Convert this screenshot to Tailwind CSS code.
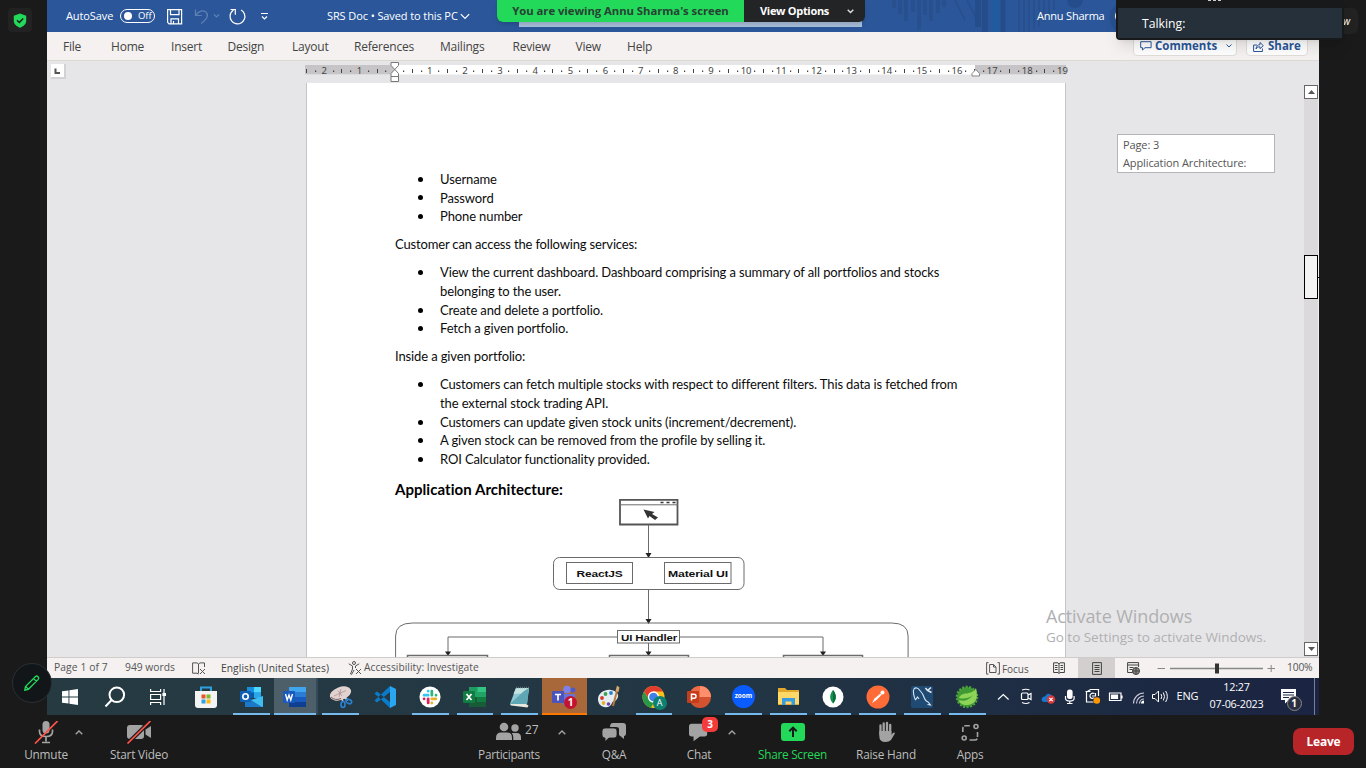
<!DOCTYPE html>
<html lang="en">
<head>
<meta charset="utf-8">
<title>SRS Doc</title>
<script src="https://cdn.jsdelivr.net/npm/@tailwindcss/browser@4"></script>
</head>
<body class="bg-[#1a1a1a]">
<div class="relative w-[1366px] h-[768px] overflow-hidden flex flex-col bg-[#1a1a1a] font-['Open_Sans',sans-serif]">
  <div class="h-[715px] flex">
    <!-- left gutter -->
    <aside class="w-[47px] pt-2 pl-2">
      <div class="size-6 rounded bg-[#222] flex items-center justify-center">
        <svg class="w-[14px] h-[15px]" viewBox="0 0 14 15"><path d="M7 .4 13.2 2.8V8c0 3.200-3 5.400-6.200 6.800C3.800 13.400.8 11.200.8 8V2.800z" fill="#23d959"/><path d="M4 7.300l2.300 2.200L10.200 5.500" fill="none" stroke="#1a1a1a" stroke-width="1.500"/></svg>
      </div>
    </aside>

    <main class="w-[1272px] flex flex-col">
      <!-- title bar -->
      <header class="h-8 bg-[#2b579a] relative flex items-center text-white text-[11px] tracking-[-0.1px] whitespace-nowrap">
        <svg class="absolute left-[830px] top-0 w-[300px] h-8" viewBox="0 0 300 32" fill="none">
          <g stroke="#28508f" stroke-width="4"><path d="M17 0v8M23 0v14M29 0v21M36 0v12M42 0v30M48 0v15M54 0v21M61 0v13M67 0v7"/></g>
          <path d="M78 0l10 20M90 0l10 20" stroke="#28508f" stroke-width="2"/>
          <path d="M101 0v27M108 0v32" stroke="#264d8b" stroke-width="6"/><path d="M118 0v32" stroke="#205a9f" stroke-width="7"/><path d="M126 0v32" stroke="#264d8b" stroke-width="5"/>
          <g stroke="#28508f" stroke-width="2"><path d="M142 0v32M147 0v32M152 0v32M157 0v30M162 0v27M167 0v22M172 0v16M177 0v10"/></g>
          <path d="M190 0a8 8 0 0 0 16 0z" fill="#264d8b"/><circle cx="248" cy="18" r="13" stroke="#28508f" stroke-width="5"/>
        </svg>
        <div class="relative flex items-center h-8 w-full">
          <span class="ml-[19px] w-[47px]">AutoSave</span>
          <span class="ml-[7px] w-[35px] h-[14px] border border-white rounded-full flex items-center pl-[3px] text-[9.500px]"><i class="size-2 rounded-full bg-white mr-[6px]"></i>Off</span>
          <svg class="ml-[11px] w-[106px] h-5" viewBox="166 6 106 20" fill="none" stroke="#fff" stroke-width="1.200">
            <path d="M167.600 9.600h14v14.200h-12.500l-1.500-1.500zM170.500 9.600v5h8.500v-5M171 23.800v-5h7.500v5M173.500 21v2.800"/>
            <g stroke="#5e80b5"><path d="M195.500 9.500v6h6.200M195.800 15.200c3-4 7-5.600 10-3.300 3.500 3.200 1.300 7-4.800 11.700"/><path d="M214 14.500l2.500 2.500 2.500-2.500"/></g>
            <path d="M233.500 10c-2 1.400-3.400 3.500-3.400 6a7.400 7.400 0 1 0 11-6M230.500 9.500h4.800v5.200"/>
            <path d="M261 13.500h7M262 16.500l2.500 2.500 2.500-2.500"/>
          </svg>
          <span class="ml-[55px] w-[132px]">SRS Doc • Saved to this PC</span>
          <svg class="ml-[1px] w-[10px] h-[7px]" viewBox="0 0 10 7" fill="none" stroke="#fff" stroke-width="1.200"><path d="M.8 1.200 5 5.400 9.200 1.200"/></svg>
          <span class="ml-[567px] text-[11px] tracking-[-0.2px]">Annu Sharma</span>
          <i class="ml-[10px] size-[16px] rounded-full bg-[#e8cfa4] border border-white"></i>
        </div>
        <i class="absolute left-[472px] top-0 w-[343px] h-[27px] bg-[#a9bfdc]"></i>
      </header>

      <!-- ribbon tabs -->
      <nav class="h-7 pt-px bg-[#f4f1f0] flex items-center text-[12px] tracking-[-0.22px] text-[#444] relative">
        <span class="ml-4 w-[48px]">File</span><span class="w-[60px]">Home</span><span class="w-[56.500px]">Insert</span><span class="w-[64.500px]">Design</span><span class="w-[62px]">Layout</span><span class="w-[86px]">References</span><span class="w-[72.500px]">Mailings</span><span class="w-[63px]">Review</span><span class="w-[51.500px]">View</span><span>Help</span>
        <div class="ml-auto mr-[11px] flex gap-[9px] h-5 -mt-px text-[#2b579a] font-bold text-[11.500px] tracking-[0px]">
          <div class="w-[104px] h-[20px] bg-white border border-[#e0dddb] flex items-center pl-[6px] rounded-sm">
            <svg class="w-3 h-[10px] mr-[3px]" viewBox="0 0 12 10" fill="none" stroke="#2b579a"><path d="M.7.700h10.400v6H5L2.500 9V6.700H.7z"/></svg>Comments
            <svg class="ml-[9px] w-[6px] h-1" viewBox="0 0 6 4" fill="none" stroke="#2b579a"><path d="M.5.500 3 3 5.500.5"/></svg>
          </div>
          <div class="w-[62px] h-[20px] bg-white border border-[#e0dddb] flex items-center pl-[6px] rounded-sm">
            <svg class="w-[11px] h-[11px] mr-[4px]" viewBox="0 0 11 11" fill="none" stroke="#2b579a"><path d="M4 4H.6v6.500h8.800V7.500M3 8c.3-3 2-4.300 4-4.300V1.500l3.300 3.200L7 7.700V5.800C5 5.800 4 6.500 3 8z"/></svg>Share
          </div>
        </div>
      </nav>

      <!-- workspace -->
      <section class="h-[597px] bg-[#e6e6e8] border-t border-[#dcd8d4] relative flex flex-col overflow-hidden">
        <div class="h-[22px] relative flex">
          <div class="ml-1 mt-[3px] size-[15px] bg-white border-r-2 border-b-2 border-[#d2d2d4] shrink-0">
            <svg class="size-[13px]" viewBox="0 0 13 13"><path d="M4.500 4.500v4.500h4.500" fill="none" stroke="#555" stroke-width="2"/></svg>
          </div>
          <svg class="ml-[239px] mt-0 w-[764px] h-[22px] shrink-0" viewBox="305 61 764 22" font-family="Noto Sans, sans-serif" font-size="9.500" fill="#444" text-anchor="middle">
            <path d="M305 65h761v9.500H305z" fill="#fff"/><path d="M305 65h90v9.500h-90zM975 65h91v9.500h-91z" fill="#c6c4c6"/>
            <g id="ruler-marks"></g>
            <path d="M391 62.500h7.500v3l-3.700 4-3.800-4zM391 76.500v-3l3.800-4 3.700 4v3zM391 76.500h7.500v5H391z" fill="#fff" stroke="#777"/>
            <path d="M972 76v-2.500l3.800-4 3.700 4V76z" fill="#fff" stroke="#888"/>
          </svg>
        </div>

        <article class="ml-[259px] w-[760px] h-[574px] bg-white border-x border-[#c4c4c6] pt-[87px] pl-[88px] overflow-hidden font-[Lato] text-[13px] leading-[18.650px] tracking-[-0.12px] text-[#0c0c0c] whitespace-nowrap">
          <ul class="flex flex-col">
            <li class="flex items-center before:content-[''] before:size-[5px] before:rounded-full before:bg-black before:ml-[23px] before:mr-[17px]">Username</li>
            <li class="flex items-center before:content-[''] before:size-[5px] before:rounded-full before:bg-black before:ml-[23px] before:mr-[17px]">Password</li>
            <li class="flex items-center before:content-[''] before:size-[5px] before:rounded-full before:bg-black before:ml-[23px] before:mr-[17px]">Phone number</li>
          </ul>
          <p class="mt-[9.300px] mb-[9.500px] tracking-[-0.16px]">Customer can access the following services:</p>
          <ul class="flex flex-col">
            <li class="flex items-center before:content-[''] before:size-[5px] before:rounded-full before:bg-black before:ml-[23px] before:mr-[17px]">View the current dashboard. Dashboard comprising a summary of all portfolios and stocks</li>
            <li class="pl-[45px]">belonging to the user.</li>
            <li class="flex items-center before:content-[''] before:size-[5px] before:rounded-full before:bg-black before:ml-[23px] before:mr-[17px]">Create and delete a portfolio.</li>
            <li class="flex items-center before:content-[''] before:size-[5px] before:rounded-full before:bg-black before:ml-[23px] before:mr-[17px]">Fetch a given portfolio.</li>
          </ul>
          <p class="mt-[9.100px] mb-[9.700px]">Inside a given portfolio:</p>
          <ul class="flex flex-col">
            <li class="flex items-center before:content-[''] before:size-[5px] before:rounded-full before:bg-black before:ml-[23px] before:mr-[17px] tracking-[-0.134px]">Customers can fetch multiple stocks with respect to different filters. This data is fetched from</li>
            <li class="pl-[45px]">the external stock trading API.</li>
            <li class="flex items-center before:content-[''] before:size-[5px] before:rounded-full before:bg-black before:ml-[23px] before:mr-[17px]">Customers can update given stock units (increment/decrement).</li>
            <li class="flex items-center before:content-[''] before:size-[5px] before:rounded-full before:bg-black before:ml-[23px] before:mr-[17px]">A given stock can be removed from the profile by selling it.</li>
            <li class="flex items-center before:content-[''] before:size-[5px] before:rounded-full before:bg-black before:ml-[23px] before:mr-[17px]">ROI Calculator functionality provided.</li>
          </ul>
          <h2 class="mt-[9.600px] h-[20px] leading-[22px] font-bold text-[15px] tracking-[0.05px] text-black">Application Architecture:</h2>
          <svg class="w-[520px] h-[160px]" viewBox="395 498 520 160" fill="none" stroke="#6b6b6b" font-family="Liberation Sans, sans-serif" font-weight="700" font-size="9.500">
            <path d="M620 499.800h57.500v24.700H620z" stroke-width="1.800" stroke="#555"/><path d="M620 504.800h58" stroke-width="1"/>
            <path d="M660.500 502.500h3M666.500 502.500h3M672.500 502.500h3" stroke="#333" stroke-width="1.400"/>
            <path d="M643.500 509.500l11 2.500-2.500 2 6 3.500-3 2.500-5.500-4-1.500 2.500z" fill="#333" stroke="none"/>
            <path d="M648.500 525v29M648.500 590v30M648.500 643v9M618 637H448v15M680 637h143v15"/>
            <path d="M645.500 553h6l-3 5zM645.500 619h6l-3 5zM645.500 651.500h6l-3 4.500zM445 651.500h6l-3 4.500zM820 651.500h6l-3 4.500z" fill="#222" stroke="none"/>
            <rect x="553.500" y="557.500" width="190.500" height="32" rx="6"/>
            <rect x="566.500" y="562.500" width="66" height="21"/><rect x="664.500" y="562.500" width="66.500" height="21"/>
            <path d="M395.600 658V636q0-13 17-13h479q16.500 0 16.500 13v22"/>
            <rect x="617.500" y="630.500" width="62" height="12.500"/>
            <path d="M407.500 658v-2.500h80v2.500M609.500 658v-2.500h79v2.500M783.500 658v-2.500h79v2.500" stroke-width="1.500"/>
            <g fill="#111" stroke="none" text-anchor="middle"><text x="599.500" y="576.600" textLength="46" lengthAdjust="spacingAndGlyphs">ReactJS</text><text x="698" y="576.600" textLength="60" lengthAdjust="spacingAndGlyphs">Material UI</text><text x="649" y="640.600" textLength="56" lengthAdjust="spacingAndGlyphs">UI Handler</text></g>
          </svg>
        </article>

        <!-- scroll position tooltip -->
        <div class="absolute left-[1070px] top-[73px] w-[158px] h-[39px] bg-white border border-[#b5b5b7] pl-[5px] pt-px text-[11px] leading-[17.500px] tracking-[-0.11px] text-[#555] whitespace-nowrap">
          <div>Page: 3</div><div>Application Architecture:</div>
        </div>
        <!-- scrollbar -->
        <div class="absolute right-0 top-[24px] w-[15px] h-[572px] bg-[#dbd9dc] flex flex-col justify-between border-r border-[#eee]">
          <div class="size-[14px] bg-white border border-[#666] flex items-center justify-center"><svg class="w-[7px] h-1" viewBox="0 0 7 4"><path d="M0 4 3.500 0 7 4z" fill="#555"/></svg></div>
          <div class="size-[14px] bg-white border border-[#666] flex items-center justify-center mb-[1px]"><svg class="w-[7px] h-1" viewBox="0 0 7 4"><path d="M0 0 3.500 4 7 0z" fill="#555"/></svg></div>
          <i class="absolute left-0 top-[170px] w-[14px] h-[44px] bg-[#f3f3f3] border border-black"></i>
          <i class="absolute left-[13px] top-[192px] w-[2px] h-px bg-black"></i>
        </div>
        <!-- activation watermark -->
        <div class="absolute left-[999px] top-[543px] text-[#b0b0b2] whitespace-nowrap">
          <div class="text-[18px] leading-[24px] tracking-[-0.1px]">Activate Windows</div>
          <div class="text-[13.500px] leading-[18px] tracking-[-0.030px]">Go to Settings to activate Windows.</div>
        </div>
      </section>

      <!-- status bar -->
      <footer class="h-[21px] bg-[#f4f1f0] border-t border-[#cfcccb] flex items-center text-[10.300px] text-[#555] whitespace-nowrap">
        <span class="ml-[7px] w-[71px] tracking-[0.1px]">Page 1 of 7</span><span class="w-[67px]">949 words</span>
        <svg class="w-[14px] h-[13px]" viewBox="0 0 14 13" fill="none" stroke="#555"><path d="M6.500 11.500V2L5 .9H.6V11.200H5l1.500.8M6.500 2 8 .9h4.500V5M8 7l5 5M13 7l-5 5"/></svg>
        <span class="ml-[15px] w-[127px] mt-[2px] text-[#444] tracking-[0.04px]">English (United States)</span>
        <svg class="w-[14px] h-[14px] mr-[2px]" viewBox="0 0 14 14" fill="none" stroke="#555"><circle cx="6" cy="2" r="1.500"/><path d="M.8 2.800 4.500 5v3L2.500 13l1.200.3L6 9M11.200 2.800 7.500 5v2M8 8l5 5M13 8l-5 5"/></svg>
        <span class="text-[10.200px] tracking-[0.04px]">Accessibility: Investigate</span>
        <svg class="ml-auto w-[14px] h-[13px] mr-[2px]" viewBox="0 0 14 13" fill="none" stroke="#555"><path d="M2.500.600H.6v11.500h1.900M11.500.6h1.900v11.500h-1.900M3.600 2.500h4L10 5v5.500H3.600zM7.500 2.500V5H10"/></svg>
        <span class="w-[51px] mt-[2px] text-[10px] tracking-[-0.04px]">Focus</span>
        <svg class="w-[12px] h-[12px]" viewBox="0 0 12 12" fill="none" stroke="#444"><path d="M6 2v9.500M6 2 5 .8H.6v9.700H5l1 1 1-1h4.400V.8H7zM2 3.500h2.500M2 5.500h2.500M2 7.500h2.500M7.500 3.500H10M7.500 5.500H10M7.500 7.500H10"/></svg>
        <span class="ml-[13px] w-[37px] h-5 bg-[#d2cfce] flex items-center justify-center"><svg class="w-[10px] h-[13px]" viewBox="0 0 10 13" fill="none" stroke="#444"><path d="M.6.600h8.800v11.800H.6zM2.500 3.500h5M2.500 5.500h5M2.500 7.500h5M2.500 9.500h5"/></svg></span>
        <svg class="ml-[12px] w-[13px] h-[13px]" viewBox="0 0 13 13" fill="none" stroke="#444"><path d="M6 10.500H.6V.6h11V5M.6 3h11M2.500 5.500h4M2.500 7.500h3"/><circle cx="9" cy="9" r="3.500" fill="#888"/><path d="M5.500 9h7M9 5.500v7"/></svg>
        <svg class="ml-[17px] w-[120px] h-[13px]" viewBox="1156 661 120 13" fill="none" stroke="#888"><path d="M1156.500 667.500h7.500M1266.500 667.500h7.500M1270.200 664v7"/><path d="M1169 667.500h93" stroke-width="1.300"/><path d="M1214 662.500h4v10h-4z" fill="#333" stroke="none"/></svg>
        <span class="ml-[10px] w-[32px] text-[10.300px] tracking-[-0.2px]">100%</span>
      </footer>

      <!-- taskbar -->
      <div class="h-[37px] bg-gradient-to-r from-[#253a41] via-[#223744] via-50% to-[#1b2442] flex">
        <div class="w-[45px] flex items-center justify-center"><svg class="size-4" viewBox="0 0 16 16" fill="#fff"><path d="M0 2.300 6.500 1.400V7.600H0zM7.400 1.200 16 0v7.600H7.400zM0 8.400h6.500v6.200L0 13.700zM7.400 8.400H16V16l-8.600-1.200z"/></svg></div>
        <div class="w-[45px] flex items-center justify-center"><svg class="size-[22px]" viewBox="0 0 22 22" fill="none" stroke="#fff" stroke-width="2"><circle cx="12.800" cy="8.800" r="7.300"/><path d="M7.600 14 1.500 20.500"/></svg></div>
        <div class="w-[45px] flex items-center justify-center"><svg class="size-4 mr-[3px]" viewBox="0 0 16 16" fill="none" stroke="#fff" stroke-width="1.200"><path d="M.6 0v2.500h10V0M.6 5.500h10v5H.6zM.6 16v-2.500h10V16M14 0v16"/><path d="M13 4.500h2.500v2H13z" fill="#fff"/></svg></div>
        <div class="ml-[2px] w-[44.750px] flex items-center justify-center"><svg class="size-6" viewBox="0 0 24 24"><path d="M7 6V2.500h10V6" fill="none" stroke="#2f9fe0" stroke-width="2"/><path d="M1 6h22v14q0 3-3 3H4q-3 0-3-3z" fill="#f3f3f3"/><path d="M7.500 9.500h4v4h-4z" fill="#e8532a"/><path d="M12.500 9.500h4v4h-4z" fill="#7db928"/><path d="M7.500 14.500h4v4h-4z" fill="#2b9fe6"/><path d="M12.500 14.500h4v4h-4z" fill="#fbb813"/></svg></div>
        <div class="w-[44.750px] flex items-center justify-center relative"><svg class="size-6" viewBox="0 0 24 24"><path d="M8 2h14v11H8z" fill="#1490df"/><path d="M15 2h7v5.500h-7z" fill="#50d9ff"/><path d="M8 7.500h7V13H8z" fill="#0a5aa8"/><path d="M15 7.500h7V13h-7z" fill="#28a8ea"/><path d="M6 11l9 5 9-5v10q0 1-1 1H6z" fill="#1c78c8"/><path d="M24 11v10q0 1-1 1L12 15z" fill="#3dbdf0"/><rect x="1" y="6" width="11" height="11" rx="1" fill="#0f5fb5"/><circle cx="6.500" cy="11.500" r="2.700" fill="none" stroke="#fff" stroke-width="1.600"/></svg><i class="absolute bottom-0 left-1 right-1 h-[2px] bg-[#76b9ed]"></i></div>
        <div class="w-[44.750px] flex items-center justify-center relative bg-[#4d5f69] border-r-2 border-[#34495a]"><svg class="size-6" viewBox="0 0 24 24"><path d="M6 2h17v5H6z" fill="#41a5ee"/><path d="M6 7h17v5H6z" fill="#2b7cd3"/><path d="M6 12h17v5H6z" fill="#185abd"/><path d="M6 17h17v5H6z" fill="#103f91"/><rect x="0" y="6" width="12" height="12" rx="1" fill="#185abd"/><path d="M2.500 9l1.700 6L6 10l1.800 5 1.700-6" fill="none" stroke="#fff" stroke-width="1.400"/></svg><i class="absolute bottom-0 left-0 right-0 h-[2px] bg-[#76b9ed]"></i></div>
        <div class="w-[44.750px] flex items-center justify-center relative"><svg class="size-6" viewBox="0 0 24 24"><path d="M11 8l3 9M11 10l8 5" stroke="#cfd6da" stroke-width="1.500"/><ellipse cx="11.500" cy="8.500" rx="11" ry="6.500" transform="rotate(-20 11.500 8.500)" fill="#e2d3d1"/><path d="M5 11 17 5.500M9 5.500l4 5.500M12 4l-2 8" stroke="#a58a8a" stroke-width=".7"/><path d="M2 12q4 4 10 1.500" stroke="#7d5f60" fill="none"/><ellipse cx="14" cy="19.500" rx="2" ry="3" fill="none" stroke="#2a7fd0" stroke-width="1.700"/><ellipse cx="20" cy="16.500" rx="3" ry="2" fill="none" stroke="#2a7fd0" stroke-width="1.700" transform="rotate(25 20 16)"/></svg><i class="absolute bottom-0 left-1 right-1 h-[2px] bg-[#76b9ed]"></i></div>
        <div class="w-[44.750px] flex items-center justify-center"><svg class="size-6" viewBox="0 0 24 24"><path d="M17 1 23 4v16l-6 3z" fill="#2aa5f2"/><path d="M17 1v6L4 17.500 1.500 15.500zM17 23v-6L4 6.500 1.500 8.500z" fill="#0a7bc9"/></svg></div>
        <div class="w-[44.750px] flex items-center justify-center relative"><svg class="size-[22px]" viewBox="0 0 24 24" stroke-width="3" stroke-linecap="round"><circle cx="12" cy="12" r="11.500" fill="#fff"/><path d="M5.500 10h4.500M10 5.500v.1" stroke="#36c5f0"/><path d="M14 5.500v4.500M18.500 10h.1" stroke="#2eb67d"/><path d="M14 14h4.500M14 18.500v.1" stroke="#ecb22e"/><path d="M10 14v4.500M5.500 14h.1" stroke="#e01e5a"/></svg><i class="absolute bottom-0 left-1 right-1 h-[2px] bg-[#76b9ed]"></i></div>
        <div class="w-[44.750px] flex items-center justify-center relative"><svg class="size-6" viewBox="0 0 24 24"><path d="M6 2h17v20H6z" fill="#21a366"/><path d="M6 2h8.500v5H6z" fill="#1f9d60"/><path d="M14.500 2H23v5h-8.500z" fill="#33c481"/><path d="M6 12h8.500v10H6zM14.500 17H23v5h-8.500z" fill="#185c37"/><path d="M14.500 12H23v5h-8.500z" fill="#107c41"/><rect y="6" width="12" height="12" rx="1" fill="#107c41"/><path d="M3.500 9l5 6M8.500 9l-5 6" stroke="#fff" stroke-width="1.700"/></svg><i class="absolute bottom-0 left-1 right-1 h-[2px] bg-[#76b9ed]"></i></div>
        <div class="w-[44.750px] flex items-center justify-center relative"><svg class="size-6" viewBox="0 0 24 24"><path d="M8 3h13l-2 16H2z" fill="#8fc8d0"/><path d="M8 3h13l-1 5L5.500 9z" fill="#c4e4e4"/><path d="M2 19 16 6l5-3-2 16z" fill="#5fa7b4"/><path d="M2 19h16l2.500 1.500-1 2L3 20.500z" fill="#e8e8e0"/><path d="M8 2.500h13" stroke="#5b6f75" stroke-width="1.500" stroke-dasharray="1 1"/></svg><i class="absolute bottom-0 left-1 right-1 h-[2px] bg-[#76b9ed]"></i></div>
        <div class="w-[44.750px] flex items-center justify-center relative bg-[#a9683a]"><svg class="size-6" viewBox="0 0 24 24"><circle cx="15" cy="4.500" r="3.800" fill="#7b83eb"/><circle cx="21" cy="5" r="2.500" fill="#5059c9"/><path d="M9 9h14v8q-1 5-6 5t-8-6z" fill="#6a73d8"/><rect x="0" y="6" width="12" height="12" rx="1" fill="#4b53bc"/><path d="M3 9.500h6M6 9.500V15.500" stroke="#fff" stroke-width="1.700"/></svg><b class="absolute left-[22px] top-[18px] size-[13px] rounded-full bg-[#c4122f] text-white text-[10px] leading-[13px] text-center">1</b><i class="absolute bottom-0 left-0 right-0 h-[2px] bg-[#ff7800]"></i></div>
        <div class="w-[44.750px] flex items-center justify-center"><svg class="size-6" viewBox="0 0 24 24"><path d="M1 14C1 8 8 4 14 5s9 5 6 9-4 1-5 4-4 5-8 4-6-4-6-8z" fill="#e6edf2"/><circle cx="5" cy="13" r="1.900" fill="#d23b2b"/><circle cx="8.500" cy="9" r="1.900" fill="#3ba24b"/><circle cx="14" cy="8" r="1.900" fill="#2d7fd0"/><circle cx="6.500" cy="18" r="1.900" fill="#e8b02b"/><circle cx="11.500" cy="19" r="1.800" fill="#6d3fb0"/><path d="M20 6 16 21" stroke="#b8793a" stroke-width="2"/><path d="M18.500 6 20 .5l2.500 2L21.500 7z" fill="#d9a866"/></svg></div>
        <div class="w-[44.750px] flex items-center justify-center relative"><svg class="size-6" viewBox="0 0 24 24"><circle cx="11.500" cy="12" r="11" fill="#fbc116"/><path d="M2 6.500A11 11 0 0 1 21 6.500H11.500L7 14z" fill="#e33b2e"/><path d="M2 6.500 8 16l4 1-3 5.700A11 11 0 0 1 2 6.500z" fill="#279847"/><circle cx="11.500" cy="12" r="5" fill="#3f80e8" stroke="#fff" stroke-width="1.300"/></svg><b class="absolute left-[21px] top-[18px] size-[14px] rounded-full bg-[#0d8070] text-white font-normal text-[9px] leading-[14px] text-center">A</b><i class="absolute bottom-0 left-1 right-1 h-[2px] bg-[#76b9ed]"></i></div>
        <div class="w-[44.750px] flex items-center justify-center"><svg class="size-6" viewBox="0 0 24 24"><circle cx="13" cy="12" r="11" fill="#d35230"/><path d="M13 1a11 11 0 0 1 11 11H13z" fill="#ff8f6b"/><path d="M2 12a11 11 0 0 1 11-11v11z" fill="#ed6c47"/><rect y="6" width="12" height="12" rx="1" fill="#c43e1c"/><path d="M4.500 15.500V9.200H7q2 0 2 2t-2 2H4.500" fill="none" stroke="#fff" stroke-width="1.500"/></svg></div>
        <div class="w-[44.750px] flex items-center justify-center relative"><b class="size-[23px] rounded-full bg-[#0b5cff] text-white text-[6.500px] tracking-[-0.1px] leading-[21px] text-center">zoom</b><i class="absolute bottom-0 left-1 right-1 h-[2px] bg-[#76b9ed]"></i></div>
        <div class="w-[44.750px] flex items-center justify-center relative"><svg class="w-[21px] h-[19px]" viewBox="0 0 21 19"><path d="M0 1h7l2 2h12v15H0z" fill="#e3a72c"/><path d="M0 5h21v12H0z" fill="#ffd867"/><path d="M4 18v-7h13v7h-3.500v-3.500h-6V18z" fill="#3a9be0"/></svg><i class="absolute bottom-0 left-1 right-1 h-[2px] bg-[#76b9ed]"></i></div>
        <div class="w-[44.750px] flex items-center justify-center relative"><svg class="size-[22px]" viewBox="0 0 22 22"><circle cx="11" cy="11" r="10.500" fill="#fff"/><path d="M11 4c4 5 3.500 10 0 13.500C7.500 14 7 9 11 4z" fill="#12924f"/><path d="M11 4c4 5 3.500 10 0 13.500v1.500z" fill="#0b6b3a"/></svg><i class="absolute bottom-0 left-1 right-1 h-[2px] bg-[#76b9ed]"></i></div>
        <div class="w-[44.750px] flex items-center justify-center relative"><svg class="size-6" viewBox="0 0 24 24"><circle cx="12" cy="12" r="11.500" fill="#ff6c37"/><path d="M6 18l2.500-4.500 6-5 1.200 1.200L10.500 15z" fill="#fff"/><circle cx="16.500" cy="7.500" r="2" fill="#fff"/></svg><i class="absolute bottom-0 left-1 right-1 h-[2px] bg-[#76b9ed]"></i></div>
        <div class="w-[44.750px] flex items-center justify-center relative"><svg class="size-6" viewBox="0 0 24 24" fill="none"><rect x="1" y="1" width="22" height="22" rx="2" fill="#1f4a73"/><path d="M5.500 15C4 12 2.500 6 4 4s4-1 5.500 1 3 3 4 6 2 5 4.500 6l2.500 3-3-.5M5.500 15l2-3 1.500 2" stroke="#d6e5f2" stroke-width="1.100"/><path d="M15.500 3l2 2.500 4 2M17.500 5.500l3.500-3" stroke="#e9eef2" stroke-width="1.500"/></svg><i class="absolute bottom-0 left-1 right-1 h-[2px] bg-[#76b9ed]"></i></div>
        <div class="w-[44.750px] flex items-center justify-center relative"><svg class="size-6" viewBox="0 0 24 24"><circle cx="12" cy="12" r="10" fill="#3f9a34" stroke="#4da33a" stroke-width="2.500" stroke-dasharray="2 1.500"/><path d="M21 3c2 8 1 16-8 17-5 .5-9-2-9-5 5 2 10 0 14-5-5 4-10 4-14 3 2-7 13-2 17-10z" fill="#8ed457"/></svg><i class="absolute bottom-0 left-1 right-1 h-[2px] bg-[#76b9ed]"></i></div>
        <!-- tray -->
        <svg class="ml-[7px] w-[174px] h-[37px] shrink-0" viewBox="997 678 174 37" fill="none" stroke="#fff" stroke-width="1.200">
          <path d="M998 699.500l5.300-5 5.300 5"/>
          <rect x="1021.500" y="693" width="6.500" height="6.500" rx="1"/><path d="M1028 695l3-1.500v6l-3-1.500M1022 690q4-1.500 7.500 0M1022 702.500q4 2 7.500 0"/>
          <path d="M1044 702q-3.500-1-2-4 1-2 3-1.500 2-4 5.500-2 3 2 3 3l1 4z" fill="#1479d2" stroke="none"/><circle cx="1051" cy="699.500" r="4.200" fill="#d63a3a" stroke="none"/><path d="M1049.300 697.800l3.400 3.400M1052.700 697.800l-3.400 3.400"/>
          <rect x="1067" y="689.500" width="5.600" height="9.500" rx="2.500" fill="#fff" stroke="none"/><path d="M1065.500 696v2.500q0 2.500 4.300 2.500t4.300-2.500V696M1069.800 701v2.500M1067 703.500h5.500"/>
          <path d="M1098.500 696v-6.500h-8l-4 2.500v10h7M1085.500 691.500h5M1094.500 693.500c-3-1-5 1-4.500 3s3 2.500 4 1M1092 696h3.500v-3"/><circle cx="1096.800" cy="700.500" r="3.300" fill="#ff9800" stroke="none"/>
          <path d="M1109.500 693h11.500v7.500h-11.500zM1122 695.500v3"/><path d="M1111.500 695h6v3.500h-6z" fill="#fff"/>
          <path d="M1133.500 703.500a10.500 10.500 0 0 1 10.500-10.500M1136.500 703.500a7.500 7.500 0 0 1 7.500-7.500M1139.500 703.500a4.500 4.500 0 0 1 4.500-4.500" stroke="#ccd"/><path d="M1141 703.500a3 3 0 0 1 3-3v3z" fill="#fff" stroke="none"/>
          <path d="M1152.500 694.500h2.500l3.500-3.500v11l-3.500-3.500h-2.500zM1161 694q1.500 2.500 0 5M1163.300 692.500q2.500 4 0 8M1165.600 691q3.500 5.500 0 11" stroke-width="1"/>
        </svg>
        <span class="w-[28px] ml-[6px] text-white text-[11px] tracking-[-0.15px] leading-[36px] shrink-0">ENG</span>
        <div class="w-[56px] ml-[4px] text-white text-[10.800px] tracking-[-0.25px] leading-[16.500px] text-center pt-[1px] whitespace-nowrap shrink-0"><div>12:27</div><div>07-06-2023</div></div>
        <div class="relative ml-[16px] w-[22px] shrink-0"><svg class="absolute left-0 top-[11px] w-[15px] h-[15px]" viewBox="0 0 15 15"><path d="M0 0h15v11H8l-4 3.500V11H0z" fill="#fff"/><path d="M2 3.500h11M2 6h11M2 8.500h6" stroke="#1b2442"/></svg><b class="absolute left-[6px] top-[18px] size-[15px] rounded-full bg-[#2b3040] border border-[#888] text-white text-[10px] leading-[13px] text-center">1</b></div>
        <i class="ml-auto mr-1 w-px bg-[#77809a]"></i>
      </div>
    </main>
  </div>

  <!-- meeting controls -->
  <div class="h-[53px] pl-px flex text-[#bdbdbd] text-[11.800px] tracking-[-0.2px] font-['Open_Sans'] whitespace-nowrap">
    <div class="ml-[18px] w-[54px] flex flex-col items-center pt-[6px]"><svg class="w-6 h-[23px]" viewBox="0 0 24 23"><rect x="8.500" y="0" width="7" height="12.500" rx="3.500" fill="#a3a3a3"/><path d="M5.500 8.500v2q0 5 6.500 5t6.500-5v-2M12 15.500v5M8 21.500h8" stroke="#a3a3a3" stroke-width="1.700" fill="none"/><path d="M1 22.500 23.500 0" stroke="#ff5348" stroke-width="1.700"/></svg><span class="mt-[2px]">Unmute</span></div>
    <div class="w-3 flex justify-center pt-[15px]"><svg class="w-2 h-[5px]" viewBox="0 0 8 5" fill="none" stroke="#a3a3a3" stroke-width="1.400"><path d="M.7 4.300 4 1l3.300 3.300"/></svg></div>
    <div class="w-[108px] flex flex-col items-center pt-[6px]"><svg class="w-[26px] h-[23px]" viewBox="0 0 26 23"><rect x="1" y="4" width="17" height="14" rx="3" fill="#a3a3a3"/><path d="M19.500 8.500 25 5v12l-5.500-3.500z" fill="#a3a3a3"/><path d="M1.500 22.500 24.500 0" stroke="#1a1a1a" stroke-width="4"/><path d="M1.500 22.500 24.500 0" stroke="#ff5348" stroke-width="1.700"/></svg><span class="mt-[2px]">Start Video</span></div>
    <div class="ml-[276px] w-20 flex flex-col items-center pt-[6px] relative"><svg class="w-[26px] h-[23px]" viewBox="0 0 26 23" fill="#a3a3a3"><circle cx="8" cy="6" r="4.300"/><path d="M0 19v-2q0-5.500 5-5.500h6q5 0 5 5.500v2z"/><circle cx="19" cy="7" r="3.700"/><path d="M17.300 19v-2.500q0-2.500-1.500-4.500h5q4.200 0 4.200 4.500V19z"/></svg><span class="mt-[2px] tracking-[-0.28px]">Participants</span><span class="absolute left-[56px] top-[6px] text-[12px]">27</span></div>
    <div class="w-[26px] flex justify-center pt-[15px]"><svg class="w-2 h-[5px]" viewBox="0 0 8 5" fill="none" stroke="#a3a3a3" stroke-width="1.400"><path d="M.7 4.300 4 1l3.300 3.300"/></svg></div>
    <div class="w-[78px] flex flex-col items-center pt-[6px]"><svg class="w-[24px] h-[23px]" viewBox="0 0 24 23" fill="#a3a3a3"><path d="M11 2h10q3 0 3 3v7q0 3-2 3v3l-5-4V8q0-2-3-2H8q0-4 3-4z"/><path d="M3 7h9q3 0 3 3v4q0 3-3 3H7l-4 3.500V17q-3 0-3-3v-4q0-3 3-3z" stroke="#1a1a1a" stroke-width=".8"/></svg><span class="mt-[2px]">Q&amp;A</span></div>
    <div class="w-[92px] pl-0 flex flex-col items-center pt-[6px] relative"><svg class="w-[20px] h-[23px]" viewBox="0 0 22 23" fill="#a3a3a3"><path d="M3 2h14q3 0 3 3v8q0 3-3 3h-5l-7 5v-5H3q-3 0-3-3V5q0-3 3-3z"/></svg><span class="mt-[2px]">Chat</span><b class="absolute left-[49px] top-[2px] w-[16px] h-[15px] rounded-[5px] bg-[#f33b3b] text-white text-[10px] leading-[15px] text-center">3</b><svg class="absolute left-[75px] top-[15px] w-2 h-[5px]" viewBox="0 0 8 5" fill="none" stroke="#a3a3a3" stroke-width="1.400"><path d="M.7 4.300 4 1l3.300 3.300"/></svg></div>
    <div class="-ml-[6px] w-[107px] flex flex-col items-center pt-[6px] text-[#23d959]"><svg class="w-6 h-[23px]" viewBox="0 0 24 23"><rect y="2" width="24" height="18" rx="3" fill="#23d959"/><path d="M12 16V7M8.300 10.300 12 6.600l3.700 3.700" fill="none" stroke="#1a1a1a" stroke-width="2"/></svg><span class="mt-[2px] tracking-[-0.27px]">Share Screen</span></div>
    <div class="w-20 flex flex-col items-center pt-[6px]"><svg class="w-[18px] h-[23px]" viewBox="0 0 18 23"><path d="M3.500 4.500v9M6.700 2.500v9M10 2v9M13.200 4v10" stroke="#a3a3a3" stroke-width="2.300" stroke-linecap="round"/><path d="M2.300 10h12.100v4l1.500-2q1.500-1 2.100.3L14 19q-2 2-5.500 2-6.200 0-6.200-6z" fill="#a3a3a3"/></svg><span class="mt-[2px]">Raise Hand</span></div>
    <div class="w-[88px] flex flex-col items-center pt-[6px]"><svg class="w-[18px] h-[23px]" viewBox="0 0 18 23" fill="none" stroke="#a3a3a3" stroke-width="1.600"><path d="M1.800 11V8q0-3.200 3-3.200h4M16.500 11v5q0 3-3 3H8.500" stroke-dasharray="5 1.500 20"/><circle cx="15" cy="5.500" r="2"/><circle cx="3.200" cy="17" r="2"/></svg><span class="mt-[2px]">Apps</span></div>
    <button class="ml-auto mr-3 mt-[13px] w-[61px] h-[27px] rounded-lg bg-[#b82528] text-white font-bold text-[12px] leading-[26px]">Leave</button>
  </div>

  <!-- floating annotate button -->
  <div class="absolute left-[12px] top-[663px] size-10 rounded-full bg-[#121619] border border-[#2a3035] flex items-center justify-center"><svg class="size-4" viewBox="0 0 16 16" fill="none" stroke="#23d959" stroke-width="1.300"><path d="M.8 15.200 1.500 11.500 11.300 1.700q1.300-1.300 2.700 0t0 2.900L4.400 14.300zM9.500 3.500l3 3M1.500 11.500l3 2.800"/></svg></div>

  <!-- screen-share banner -->
  <div class="absolute left-[497px] top-0 w-[368px] h-[22px] rounded-b-md overflow-hidden flex bg-[#222426] font-bold whitespace-nowrap shadow-md">
    <span class="w-[247px] bg-[#23d959] text-[#274234] text-[11.300px] tracking-[-0.040px] leading-[22px] text-center">You are viewing Annu Sharma's screen</span>
    <span class="ml-4 text-white text-[11px] tracking-[-0.3px] leading-[22px]">View Options</span>
    <svg class="ml-[18px] mt-[9px] w-[7px] h-[5px]" viewBox="0 0 7 5" fill="none" stroke="#ddd" stroke-width="1.400"><path d="M.7.800 3.500 3.600 6.300.8"/></svg>
  </div>

  <!-- active speaker panel -->
  <div class="absolute left-[1331px] top-2 w-[27px] h-[26px] rounded-md bg-[#222] text-white text-[10px] leading-[26px] pl-[12px] italic">w</div>
  <div class="absolute left-[1116px] top-0 w-[228px] h-[40px] rounded-b bg-[#17191b] shadow-lg px-[2px] pb-[2px] flex flex-col">
    <div class="h-2 flex justify-center gap-[2px] pr-[32px]"><i class="w-[3px] h-px bg-[#ccc]"></i><i class="w-[3px] h-px bg-[#ccc]"></i><i class="w-[3px] h-px bg-[#ccc]"></i></div>
    <div class="h-[30px] bg-[#26303a] text-white text-[12.200px] leading-[31px] pl-6">Talking:</div>
  </div>
</div>
<script>
  // centimetre labels and quarter/half marks on the ruler, zero at the left margin
  const g = document.getElementById('ruler-marks');
  const add = (tag, attrs, text) => {
    const e = document.createElementNS('http://www.w3.org/2000/svg', tag);
    for (const k in attrs) e.setAttribute(k, attrs[k]);
    if (text) e.textContent = text;
    g.appendChild(e);
  };
  for (let n = -3; n <= 19; n++) {
    const x = 394.6 + n * 35.15;
    if (n > -3 && n !== 0) add('text', { x, y: 74 }, String(Math.abs(n)));
    if (n === 19) break;
    const half = Math.round(x + 17.1);
    add('rect', { x: half, y: 69, width: 1, height: 4 });
    if (n > -3) add('rect', { x: Math.round(x + 8.3), y: 70.5, width: 1.2, height: 1.5 });
    add('rect', { x: Math.round(x + 26), y: 70.5, width: 1.2, height: 1.5 });
  }
</script>
</body>
</html>
